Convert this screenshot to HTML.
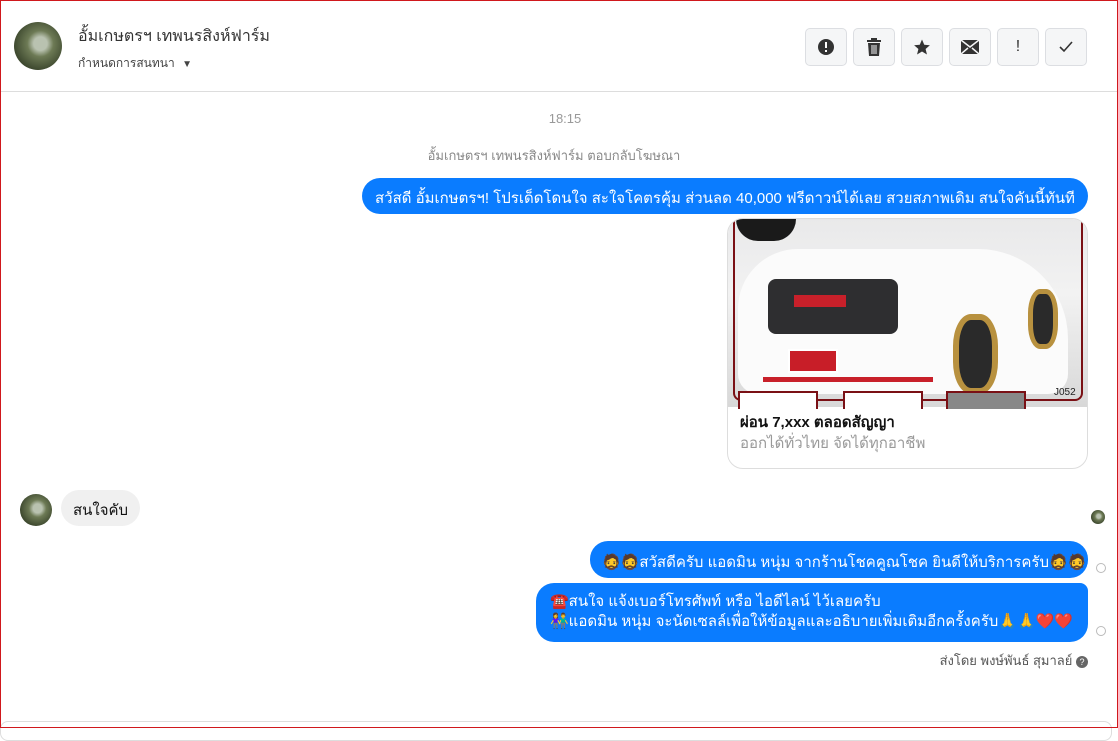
<!DOCTYPE html>
<html><head><meta charset="utf-8"><style>
*{box-sizing:border-box;margin:0;padding:0}
body{width:1118px;height:728px;overflow:hidden;background:#fff;font-family:"Liberation Sans","Noto Sans CJK SC",sans-serif;position:relative}
.frame{position:absolute;inset:0;border:1px solid #d0181d;pointer-events:none;z-index:9}
.abs{position:absolute}
.av{border-radius:50%;background:radial-gradient(circle at 55% 45%,#b9c2b0 0 18%,#6d7a55 35%,#3f4a30 70%,#2c3322)}
.btn{position:absolute;top:28px;width:42px;height:38px;border:1px solid #dcdee2;border-radius:5px;background:#f5f6f7;display:flex;align-items:center;justify-content:center;color:#333}
.bub{position:absolute;background:#0a7cff;color:#fff;font-size:15px;border-radius:18px;white-space:nowrap}
.chk{position:absolute;width:10px;height:10px;border:1px solid #bbb;border-radius:50%}
</style></head><body>
<div class="frame"></div>
<div class="abs av" style="left:14px;top:22px;width:48px;height:48px"></div>
<div class="abs" style="left:78px;top:24px;font-size:16px;color:#333">อั้มเกษตรฯ เทพนรสิงห์ฟาร์ม</div>
<div class="abs" style="left:78px;top:54px;font-size:12px;color:#444">กำหนดการสนทนา <span style="font-size:10px;margin-left:4px">▼</span></div>
<div class="btn" style="left:805px"><svg width="18" height="18" viewBox="0 0 18 18"><circle cx="9" cy="9" r="8" fill="#333"/><rect x="8" y="4" width="2" height="6" fill="#fff"/><rect x="8" y="12" width="2" height="2" fill="#fff"/></svg></div>
<div class="btn" style="left:853px"><svg width="16" height="18" viewBox="0 0 16 18"><rect x="1" y="2" width="14" height="2" fill="#333"/><rect x="5" y="0" width="6" height="2" fill="#333"/><path d="M2 5h12l-1 13H3z" fill="#333"/><path d="M6 7v9M8 7v9M10 7v9" stroke="#f5f6f7" stroke-width="1"/></svg></div>
<div class="btn" style="left:901px"><svg width="18" height="18" viewBox="0 0 24 24"><path d="M12 2l3 7 7.5.6-5.7 5 1.8 7.4L12 18l-6.6 4 1.8-7.4-5.7-5L9 9z" fill="#333"/></svg></div>
<div class="btn" style="left:949px"><svg width="18" height="14" viewBox="0 0 18 14"><rect width="18" height="14" fill="#333"/><path d="M0 0l9 7 9-7M0 14l7-6M18 14l-7-6" stroke="#f5f6f7" stroke-width="1.5" fill="none"/></svg></div>
<div class="btn" style="left:997px;font-size:16px">!</div>
<div class="btn" style="left:1045px"><svg width="16" height="14" viewBox="0 0 16 14"><path d="M2 7l4 4 8-9" stroke="#333" stroke-width="1.6" fill="none"/></svg></div>
<div class="abs" style="left:0;top:91px;width:1118px;height:1px;background:#ddd"></div>
<div class="abs" style="left:0;top:111px;width:1130px;text-align:center;font-size:13px;color:#999">18:15</div>
<div class="abs" style="left:0;top:145px;width:1108px;text-align:center;font-size:13px;color:#888">อั้มเกษตรฯ เทพนรสิงห์ฟาร์ม ตอบกลับโฆษณา</div>
<div class="bub" style="left:362px;top:178px;height:36px;padding:8px 13px;width:726px">สวัสดี อั้มเกษตรฯ! โปรเด็ดโดนใจ สะใจโคตรคุ้ม ส่วนลด 40,000 ฟรีดาวน์ได้เลย สวยสภาพเดิม สนใจคันนี้ทันที</div>
<div class="abs" style="left:727px;top:218px;width:361px;height:251px;border:1px solid #ddd;border-radius:16px;overflow:hidden">
 <div class="abs" style="left:0;top:0;width:359px;height:188px;background:linear-gradient(180deg,#e9e9ea 0,#f2f2f2 40%,#d8d8d8 100%)">
  <div class="abs" style="left:5px;top:2px;width:350px;height:180px;border:2px solid #7a1015;border-top:none;border-radius:0 0 8px 8px"></div>
  <div class="abs" style="left:8px;top:0;width:60px;height:22px;border-radius:0 0 30px 30px;background:#1a1a1a"></div>
  <div class="abs" style="left:10px;top:30px;width:330px;height:145px;border-radius:60px 90px 20px 20px;background:#fbfbfb"></div>
  <div class="abs" style="left:40px;top:60px;width:130px;height:55px;background:#2e2e30;border-radius:8px"></div>
  <div class="abs" style="left:66px;top:76px;width:52px;height:12px;background:#c8202a"></div>
  <div class="abs" style="left:225px;top:95px;width:45px;height:80px;border-radius:40%;background:#2a2a2a;border:6px solid #b8913f"></div>
  <div class="abs" style="left:300px;top:70px;width:30px;height:60px;border-radius:40%;background:#2a2a2a;border:5px solid #b8913f"></div>
  <div class="abs" style="left:60px;top:130px;width:50px;height:24px;background:#c81e28;border:2px solid #fff"></div>
  <div class="abs" style="left:35px;top:158px;width:170px;height:5px;background:#c8202a"></div>
  <div class="abs" style="left:10px;top:172px;width:80px;height:18px;background:#fff;border:2px solid #7a1015;border-bottom:none"></div>
  <div class="abs" style="left:115px;top:172px;width:80px;height:18px;background:#fff;border:2px solid #7a1015;border-bottom:none"></div>
  <div class="abs" style="left:218px;top:172px;width:80px;height:18px;background:#888;border:2px solid #7a1015;border-bottom:none"></div>
  <div class="abs" style="left:326px;top:168px;font-size:10px;color:#222">J052</div>
 </div>
 <div class="abs" style="left:12px;top:191px;font-size:15px;font-weight:bold;color:#111">ผ่อน 7,xxx ตลอดสัญญา</div>
 <div class="abs" style="left:12px;top:212px;font-size:15px;color:#999">ออกได้ทั่วไทย จัดได้ทุกอาชีพ</div>
</div>
<div class="abs av" style="left:20px;top:494px;width:32px;height:32px"></div>
<div class="abs" style="left:61px;top:490px;height:36px;padding:8px 12px;background:#f0f0f0;border-radius:18px;font-size:15px;color:#111">สนใจคับ</div>
<div class="abs av" style="left:1091px;top:510px;width:14px;height:14px"></div>
<div class="bub" style="left:590px;top:541px;height:37px;padding:9px 12px;width:498px">🧔🧔สวัสดีครับ แอดมิน หนุ่ม จากร้านโชคคูณโชค ยินดีให้บริการครับ🧔🧔</div>
<div class="chk" style="left:1096px;top:563px"></div>
<div class="bub" style="left:536px;top:583px;height:59px;padding:9px 14px;width:552px;line-height:20px;border-radius:18px 8px 18px 18px">☎️สนใจ แจ้งเบอร์โทรศัพท์ หรือ ไอดีไลน์  ไว้เลยครับ<br>👫แอดมิน หนุ่ม จะนัดเซลล์เพื่อให้ข้อมูลและอธิบายเพิ่มเติมอีกครั้งครับ🙏🙏❤️❤️</div>
<div class="chk" style="left:1096px;top:626px"></div>
<div class="abs" style="left:900px;top:650px;width:188px;text-align:right;font-size:13px;color:#555">ส่งโดย พงษ์พันธ์ สุมาลย์ <span style="display:inline-block;width:12px;height:12px;border-radius:50%;background:#666;color:#fff;font-size:9px;text-align:center;line-height:12px">?</span></div>
<div class="abs" style="left:0;top:721px;width:1112px;height:20px;border:1px solid #ddd;border-radius:8px"></div>
</body></html>
